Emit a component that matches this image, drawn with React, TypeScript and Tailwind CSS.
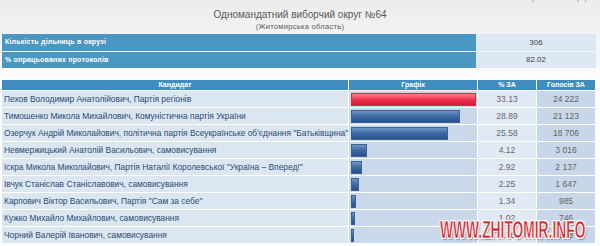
const rows = [
  { name: "Пехов Володимир Анатолійович, Партія регіонів", pct: "33.13", votes: "24 222", red: true },
  { name: "Тимошенко Микола Михайлович, Комуністична партія України", pct: "28.89", votes: "21 123" },
  { name: "Озерчук Андрій Миколайович, політична партія Всеукраїнське об'єднання \"Батьківщина\"", pct: "25.58", votes: "18 706" },
  { name: "Невмержицький Анатолій Васильович, самовисування", pct: "4.12", votes: "3 016" },
  { name: "Іскра Микола Миколайович, Партія Наталії Королевської \"Україна – Вперед!\"", pct: "2.92", votes: "2 137" },
  { name: "Івчук Станіслав Станіславович, самовисування", pct: "2.25", votes: "1 647" },
  { name: "Карпович Віктор Васильович, Партія \"Сам за себе\"", pct: "1.34", votes: "985" },
  { name: "Кужко Михайло Михайлович, самовисування", pct: "1.02", votes: "746" },
  { name: "Чорний Валерій Іванович, самовисування", pct: "0.76", votes: "556" },
];

const font = { fontFamily: "'Liberation Sans', Arial, sans-serif" };

export default function App() {
  return (
    <div
      className="relative w-[600px] h-[246px] overflow-hidden bg-gradient-to-b from-[#ececec] to-[#ffffff] to-[40%]"
      style={font}
    >
      <div className="h-[2px] overflow-hidden pr-[8px] text-right text-[8px] leading-[8px] text-[#7b8fa3]">
        <div className="-mt-[6px]">Статистика голосування виборців</div>
      </div>

      <div className="text-center text-[10px] leading-[12px] text-[#5a5a5a] mt-[7px]">
        Одномандатний виборчий округ №64
      </div>
      <div className="text-center text-[7.5px] leading-[10px] tracking-[0.3px] text-[#5a5a5a] mt-[1px]">
        (Житомирська область)
      </div>

      <div className="mt-[2px] ml-[2px] w-[594px] flex flex-col gap-px">
        <div className="flex h-[17px]">
          <div className="w-[474px] bg-[#4a97c4] text-white text-[7px] font-bold pl-[3px] flex items-center tracking-[0.2px]">
            Кількість дільниць в окрузі
          </div>
          <div className="flex-1 bg-[#dce8f3] text-[#444] text-[8px] flex items-center justify-center">306</div>
        </div>
        <div className="flex h-[16px]">
          <div className="w-[474px] bg-[#4a97c4] text-white text-[7px] font-bold pl-[3px] flex items-center tracking-[0.2px]">
            % опрацьованих протоколів
          </div>
          <div className="flex-1 bg-[#dce8f3] text-[#444] text-[8px] flex items-center justify-center">82.02</div>
        </div>
      </div>

      <div className="mt-[12px] ml-[2px] w-[594px] grid grid-cols-[346px_128px_58px_58px] gap-px">
        <div className="h-[10px] bg-[#3f8dbf] text-white text-[7px] font-bold flex items-center justify-center">Кандидат</div>
        <div className="h-[10px] bg-[#3f8dbf] text-white text-[7px] font-bold flex items-center justify-center">Графік</div>
        <div className="h-[10px] bg-[#3f8dbf] text-white text-[7px] font-bold flex items-center justify-center">% ЗА</div>
        <div className="h-[10px] bg-[#3f8dbf] text-white text-[7px] font-bold flex items-center justify-center">Голосів ЗА</div>
        {rows.map((r) => {
          const w = Math.max(2, Math.round((parseFloat(r.pct) / 33.13) * 125));
          return (
            <div key={r.name} className="contents">
              <div className="h-[16px] bg-[#dbe6f1] text-[8.4px] text-[#2a4b75] pl-[2px] flex items-center whitespace-nowrap">
                {r.name}
              </div>
              <div className="h-[16px] bg-[#c9d9ea] flex items-center pl-[2px]">
                <div
                  className={
                    r.red
                      ? "h-[13px] bg-gradient-to-b from-[#ff7a8e] via-[#f2304f] to-[#c81f3a] border border-[#d9283f]"
                      : "h-[13px] bg-gradient-to-b from-[#6d95c4] via-[#3c69a4] to-[#28508a] border border-[#3a6296]"
                  }
                  style={{ width: w }}
                />
              </div>
              <div className="h-[16px] bg-[#e1eaf4] text-[8.5px] text-[#666] flex items-center justify-center">{r.pct}</div>
              <div className="h-[16px] bg-[#c7d7e9] text-[8.5px] text-[#666] flex items-center justify-center">{r.votes}</div>
            </div>
          );
        })}
      </div>

      <div
        className="absolute left-[440px] top-[219px] text-[23px] leading-[23px] font-bold text-[#d6242c] origin-left scale-x-[0.6]"
        style={{
          fontFamily: "'Liberation Sans', Arial, sans-serif",
          WebkitTextStroke: "0.5px #ffffff",
          textShadow: "0 0 2px #fff, 1px 1px 0 #fff, -1px -1px 0 #fff, 1px -1px 0 #fff, -1px 1px 0 #fff, 2px 2px 2px rgba(0,0,0,0.4)",
        }}
      >
        WWW.ZHITOMIR.INFO
      </div>
    </div>
  );
}
